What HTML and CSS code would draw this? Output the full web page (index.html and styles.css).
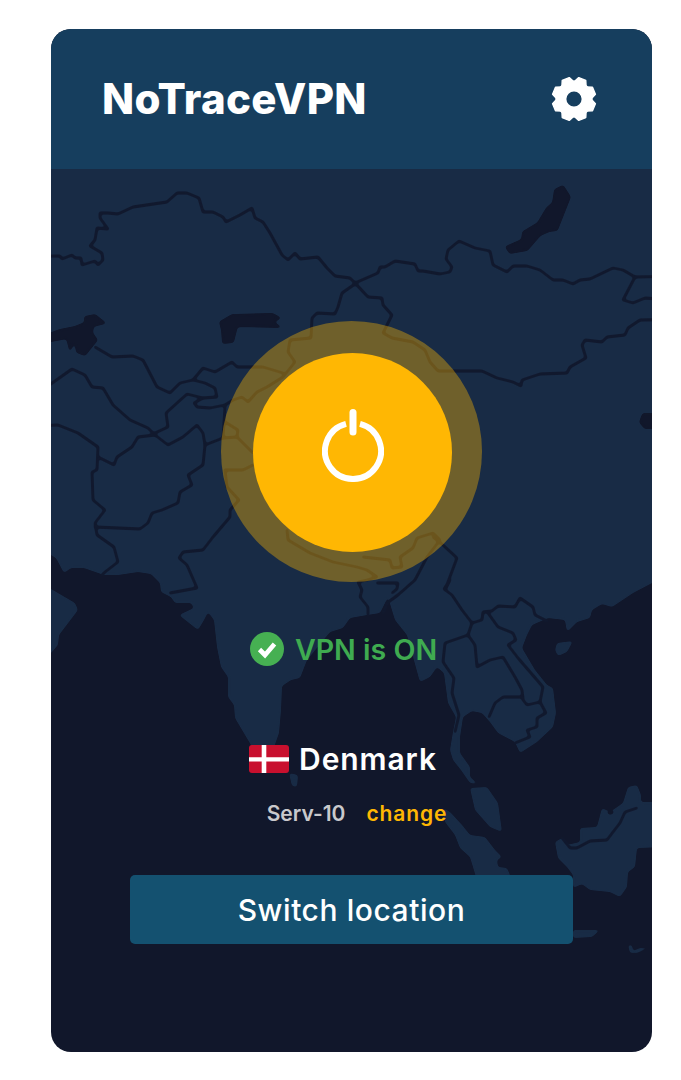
FILE: index.html
```html
<!DOCTYPE html>
<html lang="en">
<head>
<meta charset="utf-8">
<title>NoTraceVPN</title>
<link rel="stylesheet" href="styles.css">
</head>
<body>
<div class="card">
  <header class="top">
    <h1 class="brand">NoTraceVPN</h1>
    <svg class="gear" viewBox="-24 -24 48 48" aria-label="Settings">
      <circle class="gear-ring" r="13.1"/>
      <g class="gear-teeth">
        <polygon transform="rotate(22.5)" points="-6.5,-16 -3.8,-21.6 3.8,-21.6 6.5,-16"/>
        <polygon transform="rotate(67.5)" points="-6.5,-16 -3.8,-21.6 3.8,-21.6 6.5,-16"/>
        <polygon transform="rotate(112.5)" points="-6.5,-16 -3.8,-21.6 3.8,-21.6 6.5,-16"/>
        <polygon transform="rotate(157.5)" points="-6.5,-16 -3.8,-21.6 3.8,-21.6 6.5,-16"/>
        <polygon transform="rotate(202.5)" points="-6.5,-16 -3.8,-21.6 3.8,-21.6 6.5,-16"/>
        <polygon transform="rotate(247.5)" points="-6.5,-16 -3.8,-21.6 3.8,-21.6 6.5,-16"/>
        <polygon transform="rotate(292.5)" points="-6.5,-16 -3.8,-21.6 3.8,-21.6 6.5,-16"/>
        <polygon transform="rotate(337.5)" points="-6.5,-16 -3.8,-21.6 3.8,-21.6 6.5,-16"/>
      </g>
    </svg>
  </header>
  <main class="body">
    <svg class="map" viewBox="51 169 601 883" aria-hidden="true">
      <defs>
        <filter id="soft-shape" filterUnits="userSpaceOnUse" x="0" y="120" width="700" height="980" color-interpolation-filters="sRGB">
          <feGaussianBlur stdDeviation="1.8"/>
          <feColorMatrix values="1 0 0 0 0  0 1 0 0 0  0 0 1 0 0  0 0 0 5 -2"/>
        </filter>
        <filter id="soft-line" filterUnits="userSpaceOnUse" x="0" y="120" width="700" height="980" color-interpolation-filters="sRGB">
          <feGaussianBlur stdDeviation="0.9"/>
          <feColorMatrix values="1 0 0 0 0  0 1 0 0 0  0 0 1 0 0  0 0 0 3 -0.9"/>
        </filter>
      </defs>
      <g class="land">
        <path d="M0 120H700V558L652 583 633 593 612 607 602 604 592 610 590 618 577 622 567 632 565 620 548 618 532 625 527 635 522 648 535 670 547 685 553 688 556 713 553 727 537 742 520 753 515 742 498 733 490 722 482 713 472 711 463 717 460 737 460 753 470 767 470 777 478 784 470 783 461 770 453 760 450 750 453 732 456 717 448 703 444 673 437 667 430 677 420 682 407 635 395 620 388 597 380 613 367 615 350 618 343 628 330 632 307 660 300 678 291 680 282 686 281 710 279 733 274 747 265 768 251 745 235 718 234 705 228 697 228 677 221 667 217 647 214 620 208 612 204 620 198 630 179 615 194 608 191 603 175 603 171 597 161 592 160 583 151 574 138 572 118 575 104 575 84 568 71 568 64 573 56 558 51 555 0 530Z"/>
        <path d="M0 560L51 589 75 603 78 610 59 635 58 645 51 653 0 690Z"/>
        <path d="M289 773L298 775 297 787 292 786Z"/>
        <path d="M470 788L487 787 498 803 502 832 490 827 475 810Z"/>
        <path d="M443 808L450 812 462 825 470 835 485 837 495 850 502 857 497 860 498 867 507 868 510 875V890H480L470 857 460 848 455 835 445 822Z"/>
        <path d="M555 842L562 838 567 845 580 842 580 828 597 827 602 808 610 812 623 803 628 787 637 785 641 795 641 802 700 802V846L637 848 635 867 628 872 627 887 620 897 610 892 590 890 582 884 573 888V875L567 867 558 858Z"/>
        <path d="M557 643L573 641 567 652 558 656 555 650Z"/>
        <path d="M573 930H600L592 937 573 938Z"/>
        <path d="M628 945L630 953 637 953 650 947 640 948 633 951 632 945Z"/>
      </g>
      <g class="lakes">
        <path d="M563 186L570 197 557 230 549 231 540 235 527 250 510 253 506 247 522 240 523 232 538 223 547 208 553 203 555 190Z"/>
        <path d="M220 322L232 315 273 314 280 318 273 322 280 327 237 326 233 342 223 343 222 330Z"/>
        <path d="M20 345L60 330 75 327 85 323 85 317 95 315 105 323 93 326 92 333 97 340 85 355 77 352 75 340 70 350 67 338 51 341Z"/>
        <path d="M700 414H643L640 422 645 428 700 429Z"/>
        <path d="M608 811L612 810 613 813 609 814Z"/>
      </g>
      <g class="borders">
        <path d="M0 257L60 256 62 259 72 255 75 258 81 258 82 265 95 261 98 265 103 260 102 253 90 246 95 240 97 228 108 229 100 218 100 213 108 213 118 214 133 207 167 202 177 193 187 193 199 198 203 212 213 212 223 217 226 222 240 215 252 208 255 218 263 222 270 233 282 255 288 260 295 253 300 259 318 257 327 268 335 276 350 278 355 283 378 273 380 267 385 267 395 261 415 264 418 271 423 271 440 274 450 272 452 267 446 259 448 250 459 241 475 248 490 251 493 265 507 272 513 266 527 266 540 270 553 280 563 280 573 284 580 280 590 279 613 268 623 270 635 277 700 276"/>
        <path d="M635 277L623 300 633 303 645 298 700 302"/>
        <path d="M700 319L640 320 628 328 625 335 607 337 602 342 585 340 582 345 586 358 570 367 567 373 540 374 522 380 521 386 513 382 497 378 482 371 438 371 430 362 425 350 413 342 392 338 383 333 392 315 383 305 382 298 368 297 355 283"/>
        <path d="M355 284L342 293 338 307 335 314 317 313 312 318 311 338 290 340 288 352 295 362 283 377 267 387 257 392 248 402 242 397 233 400 225 405 210 408 197 407 194 403 203 398 217 397 215 388 205 383 193 380 203 368 215 372 232 362 237 367 263 367 283 373"/>
        <path d="M193 380L180 383 170 393 157 387 143 360 133 356 112 357 95 347"/>
        <path d="M0 420L72 369 85 375 92 387 103 388 113 405 130 420 148 428 155 435 168 445 183 437 197 425 203 433 205 445 223 438 225 407"/>
        <path d="M155 435L138 437 132 447 117 457 114 465 98 457"/>
        <path d="M155 433L168 427 166 413 187 394 203 398"/>
        <path d="M0 427L58 425 78 433 98 447 97 470 92 472 93 500 105 510 95 523 97 535 114 547 118 562 105 572 102 575"/>
        <path d="M95 527L140 529 148 523 152 513 162 510 178 503 180 492 192 485 188 475 203 465 205 445"/>
        <path d="M223 438L237 437 238 430 225 422"/>
        <path d="M237 437L253 453"/>
        <path d="M225 470L243 470 253 465"/>
        <path d="M225 470L227 487 239 500 230 510 230 517 213 537 203 550 183 552 179 558 187 565 197 588 170 593"/>
        <path d="M287 530L288 540 310 553 333 562 357 567 367 570 377 577 367 580 358 582 362 590 360 597 368 607 368 615"/>
        <path d="M363 557L390 560 392 568 402 567 400 557 413 548 417 538 433 533 440 540 427 557 415 580 398 595 387 603 383 613"/>
        <path d="M433 537L443 545 457 558 445 590 450 580 444 589 452 595 462 610 472 623 482 620 483 612 492 611 498 606 515 607 520 598 533 607 535 615 547 621"/>
        <path d="M377 583H398L397 589 392 593"/>
        <path d="M472 623L468 635 445 643 443 662 454 678 452 693 459 715 455 732"/>
        <path d="M468 635L475 645 477 667 490 660 503 657 515 677 522 690 523 700 527 705 540 702 546 713 537 718 537 727 527 730 530 737 515 743"/>
        <path d="M523 697H503L495 703 489 717"/>
        <path d="M488 613L498 627 513 633 516 640 508 645 518 658 543 687 540 702"/>
        <path d="M562 838L570 848 577 848 590 841 607 840 613 832 620 823 625 812 637 808"/>
      </g>
    </svg>

    <div class="power-halo">
      <button class="power" type="button" aria-label="Toggle VPN">
        <svg class="power-icon" viewBox="0 0 62 74">
          <path class="power-arc" d="M24 15.9A28 28 0 1 0 38 15.9"/>
          <line class="power-bar" x1="31" y1="4.5" x2="31" y2="24"/>
        </svg>
      </button>
    </div>

    <div class="status">
      <svg class="check" viewBox="0 0 34 34"><circle cx="17" cy="17" r="17"/><path d="M9.5 17.5L15 23 24.5 12"/></svg>
      <span>VPN is ON</span>
    </div>

    <div class="country">
      <svg class="flag" viewBox="0 0 40 28"><rect width="40" height="28" rx="3"/><path d="M12.7 0h4.6v28h-4.6zM0 12.2h40v4.4H0z"/></svg>
      <span>Denmark</span>
    </div>

    <div class="server">
      <span class="server-name">Serv-10</span>
      <a class="server-change">change</a>
    </div>

    <button class="switch" type="button">Switch location</button>
  </main>
</div>
</body>
</html>
```

FILE: styles.css
```css
* { box-sizing: border-box; }
html, body { margin: 0; padding: 0; background: #fff; }
body { font-family: Inter, "Noto Sans", sans-serif; padding: 29px 0 0 51px; }

.card {
  width: 601px;
  height: 1023px;
  border-radius: 20px;
  overflow: hidden;
  background: #11172b;
  display: flex;
  flex-direction: column;
}

.top {
  height: 140px;
  flex: none;
  background: #163e5e;
  display: flex;
  align-items: center;
  justify-content: space-between;
  padding: 0 54px 1px 51px;
}
.brand { margin: 0; font-size: 42px; font-weight: 800; line-height: 1; color: #fff; letter-spacing: 0.3px; }
.gear { width: 48px; height: 48px; }
.gear-ring { fill: none; stroke: #fff; stroke-width: 11; }
.gear-teeth polygon { fill: #fff; stroke: #fff; stroke-width: 1.4; stroke-linejoin: round; }

.body {
  position: relative;
  flex: 1;
  display: flex;
  flex-direction: column;
  align-items: center;
  padding-top: 152px;
}
.map { position: absolute; inset: 0; width: 100%; height: 100%; }
.land { filter: url(#soft-shape); }
.land path { fill: #182b45; }
.lakes { filter: url(#soft-shape); }
.lakes path { fill: #11172b; stroke: #11172b; stroke-width: 2; stroke-linejoin: round; }
.borders { filter: url(#soft-line); }
.borders path { fill: none; stroke: #11192e; stroke-width: 2.8; stroke-linejoin: round; stroke-linecap: round; }

.power-halo {
  position: relative;
  width: 261px;
  height: 261px;
  padding: 32px 30px 30px 32px;
  border-radius: 50%;
  background: rgba(255, 183, 3, 0.38);
}
.power {
  width: 199px;
  height: 199px;
  display: flex;
  align-items: flex-start;
  justify-content: center;
  padding: 55px 0 0;
  border: 0;
  border-radius: 50%;
  background: #ffb703;
}
.power-icon { width: 62px; height: 74px; flex: none; }
.power-arc { fill: none; stroke: #fff; stroke-width: 6; }
.power-bar { stroke: #fff; stroke-width: 7; stroke-linecap: round; }

.status, .country, .server { position: relative; display: flex; align-items: center; }
.status {
  margin-top: 50px;
  padding-right: 16px;
  gap: 11px;
  height: 34px;
  font-size: 28.6px;
  font-weight: 600;
  color: #3fab50;
}
.check { width: 34px; height: 34px; }
.check circle { fill: #46b052; }
.check path { fill: none; stroke: #fff; stroke-width: 4.6; }

.country {
  margin-top: 76px;
  padding-right: 17px;
  gap: 10px;
  height: 34px;
  font-size: 30px;
  font-weight: 600;
  letter-spacing: 0.9px;
  color: #fff;
}
.flag { width: 40px; height: 28px; }
.flag rect { fill: #c8102e; }
.flag path { fill: #fff; }

.server {
  margin-top: 22px;
  padding-left: 11px;
  gap: 21px;
  height: 30px;
  font-size: 21px;
  font-weight: 600;
}
.server-name { color: #c9c9cc; }
.server-change { color: #ffb703; letter-spacing: 0.9px; }

.switch {
  position: relative;
  margin-top: 47px;
  width: 443px;
  height: 69px;
  border: 0;
  border-radius: 5px;
  background: #145170;
  color: #fff;
  font-family: inherit;
  font-size: 30px;
  font-weight: 500;
  letter-spacing: 0.55px;
}
```
